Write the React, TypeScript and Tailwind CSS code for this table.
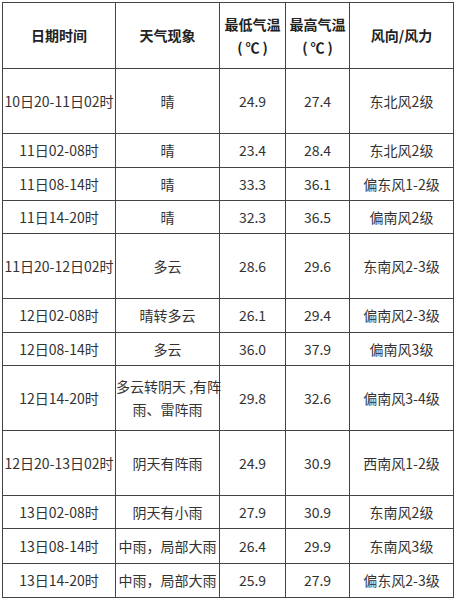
import React from "react";

type Row = { d: string; w: React.ReactNode; lo: string; hi: string; f: string; h: number };

const rows: Row[] = [
  { d: "10日20-11日02时", w: "晴", lo: "24.9", hi: "27.4", f: "东北风2级", h: 65 },
  { d: "11日02-08时", w: "晴", lo: "23.4", hi: "28.4", f: "东北风2级", h: 34 },
  { d: "11日08-14时", w: "晴", lo: "33.3", hi: "36.1", f: "偏东风1-2级", h: 33 },
  { d: "11日14-20时", w: "晴", lo: "32.3", hi: "36.5", f: "偏南风2级", h: 33 },
  { d: "11日20-12日02时", w: "多云", lo: "28.6", hi: "29.6", f: "东南风2-3级", h: 65 },
  { d: "12日02-08时", w: "晴转多云", lo: "26.1", hi: "29.4", f: "偏南风2-3级", h: 34 },
  { d: "12日08-14时", w: "多云", lo: "36.0", hi: "37.9", f: "偏南风3级", h: 33 },
  {
    d: "12日14-20时",
    w: (
      <>
        多云转阴天 ,有阵
        <br />
        雨、雷阵雨
      </>
    ),
    lo: "29.8",
    hi: "32.6",
    f: "偏南风3-4级",
    h: 65,
  },
  { d: "12日20-13日02时", w: "阴天有阵雨", lo: "24.9", hi: "30.9", f: "西南风1-2级", h: 65 },
  { d: "13日02-08时", w: "阴天有小雨", lo: "27.9", hi: "30.9", f: "东南风2级", h: 33 },
  { d: "13日08-14时", w: "中雨，局部大雨", lo: "26.4", hi: "29.9", f: "东南风3级", h: 35 },
  { d: "13日14-20时", w: "中雨，局部大雨", lo: "25.9", hi: "27.9", f: "偏东风2-3级", h: 34 },
];

const cell =
  "border border-[#444444] text-center align-middle whitespace-nowrap p-0 overflow-visible";

function Unit() {
  return (
    <span className="inline-flex items-center gap-[3px]">
      <span>(</span>
      <span>℃</span>
      <span>)</span>
    </span>
  );
}

export default function App() {
  return (
    <div
      className="w-[456px] h-[600px] bg-white pl-[2px] pt-[2px] text-[#333333]"
      style={{ fontFamily: '"Microsoft YaHei", "Noto Sans CJK SC", "Noto Sans", sans-serif' }}
    >
      <table className="table-fixed border-collapse w-[451px] text-[14px] leading-[23px]">
        <colgroup>
          <col className="w-[113px]" />
          <col className="w-[104px]" />
          <col className="w-[66px]" />
          <col className="w-[64px]" />
          <col className="w-[104px]" />
        </colgroup>
        <thead>
          <tr className="h-[66px] font-bold text-[#222222]">
            <th className={cell}>日期时间</th>
            <th className={cell}>天气现象</th>
            <th className={cell}>
              最低气温
              <br />
              <Unit />
            </th>
            <th className={cell}>
              最高气温
              <br />
              <Unit />
            </th>
            <th className={cell}>风向/风力</th>
          </tr>
        </thead>
        <tbody>
          {rows.map((r, i) => (
            <tr key={i} style={{ height: r.h }}>
              <td className={cell}>{r.d}</td>
              <td className={cell}>{r.w}</td>
              <td className={cell}>{r.lo}</td>
              <td className={cell}>{r.hi}</td>
              <td className={cell}>{r.f}</td>
            </tr>
          ))}
        </tbody>
      </table>
    </div>
  );
}
